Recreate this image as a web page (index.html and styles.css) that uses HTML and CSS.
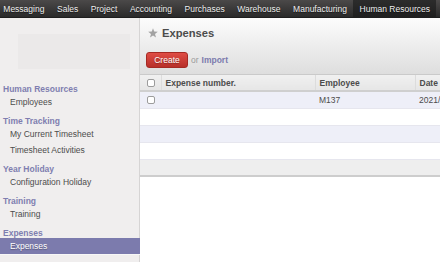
FILE: index.html
```html
<!DOCTYPE html>
<html>
<head>
<meta charset="utf-8">
<link rel="stylesheet" href="styles.css">
</head>
<body>
<nav class="topbar">
  <a class="tab first">Messaging</a>
  <a class="tab">Sales</a>
  <a class="tab">Project</a>
  <a class="tab">Accounting</a>
  <a class="tab">Purchases</a>
  <a class="tab">Warehouse</a>
  <a class="tab">Manufacturing</a>
  <a class="tab active">Human Resources</a>
</nav>
<div class="layout">
  <aside class="sidebar">
    <div class="logo"></div>
    <div class="section">Human Resources</div>
    <div class="item">Employees</div>
    <div class="section">Time Tracking</div>
    <div class="item">My Current Timesheet</div>
    <div class="item">Timesheet Activities</div>
    <div class="section">Year Holiday</div>
    <div class="item">Configuration Holiday</div>
    <div class="section">Training</div>
    <div class="item">Training</div>
    <div class="section">Expenses</div>
    <div class="item selected">Expenses</div>
  </aside>
  <main class="main">
    <header class="view-header">
      <h1 class="title">
        <svg class="star" viewBox="0 0 10 10" width="10" height="10"><path d="M5 0.3 L6.2 3.6 L9.8 3.7 L7 5.9 L8 9.4 L5 7.4 L2 9.4 L3 5.9 L0.2 3.7 L3.8 3.6 Z" fill="#a3a3a3"/></svg>
        <span>Expenses</span>
      </h1>
      <div class="actions">
        <button class="btn-create">Create</button>
        <span class="or">or</span>
        <a class="import">Import</a>
      </div>
    </header>
    <table class="list">
      <colgroup>
        <col class="c-check"><col class="c-num"><col class="c-emp"><col class="c-date">
      </colgroup>
      <thead>
        <tr>
          <th class="cb-cell"><span class="cb"></span></th>
          <th>Expense number.</th>
          <th>Employee</th>
          <th>Date</th>
        </tr>
      </thead>
      <tbody>
        <tr class="odd">
          <td class="cb-cell"><span class="cb"></span></td>
          <td></td>
          <td>M137</td>
          <td>2021/05/12</td>
        </tr>
        <tr><td></td><td></td><td></td><td></td></tr>
        <tr class="odd"><td></td><td></td><td></td><td></td></tr>
        <tr><td></td><td></td><td></td><td></td></tr>
      </tbody>
      <tfoot>
        <tr><td></td><td></td><td></td><td></td></tr>
      </tfoot>
    </table>
  </main>
</div>
</body>
</html>
```

FILE: styles.css
```css
* { box-sizing: border-box; }
html, body {
  margin: 0;
  padding: 0;
  width: 440px;
  height: 262px;
  overflow: hidden;
  background: #ffffff;
  font-family: "Liberation Sans", Arial, sans-serif;
  font-size: 8.5px;
  color: #4c4c4c;
}

.topbar {
  display: flex;
  height: 18px;
  background: linear-gradient(#4b4949, #2a2a2a);
  border-bottom: 1px solid #1e1e1e;
  padding-left: 0;
}
.tab {
  display: flex;
  align-items: center;
  padding: 0 6.3px;
  color: #eeeeee;
  text-shadow: 0 1px 1px rgba(0,0,0,0.6);
  white-space: nowrap;
}
.tab.first { padding-left: 3.3px; }
.tab.active {
  background: linear-gradient(#2c2c2c, #1f1f1f);
}

.layout {
  display: flex;
  height: 244px;
}

.sidebar {
  width: 140px;
  flex: none;
  background: #f0eeee;
  border-right: 1px solid #d6d4d4;
  display: flex;
  flex-direction: column;
}
.logo {
  margin: 16px 0 9px 18px;
  width: 112px;
  height: 35px;
  background: #ebe9e9;
}
.section {
  margin-top: 6px;
  height: 10px;
  line-height: 10px;
  padding-left: 3px;
  font-weight: bold;
  color: #7f7eb0;
}
.item {
  height: 16px;
  line-height: 16px;
  padding-left: 10px;
  color: #4c4c4c;
}
.item.selected {
  background: #7c7bad;
  color: #ffffff;
  text-shadow: 0 1px 1px rgba(0,0,0,0.3);
  margin-right: -1px;
  border-bottom: 1px solid #f7f7f7;
  height: 17px;
}

.main {
  flex: 1;
  min-width: 0;
  overflow: hidden;
}
.view-header {
  height: 57px;
  padding: 8px 0 0 6px;
  background: linear-gradient(#fcfcfc, #dedede);
  border-bottom: 1px solid #cacaca;
}
.title {
  margin: 0;
  height: 14px;
  display: flex;
  align-items: center;
  gap: 4px;
  font-size: 11.2px;
  font-weight: bold;
  color: #4c4c4c;
}
.star { margin-left: 2px; }
.actions {
  margin-top: 12px;
  display: flex;
  align-items: center;
  height: 16px;
}
.btn-create {
  height: 16px;
  width: 42px;
  padding: 0;
  border: 1px solid #a52a24;
  border-radius: 3px;
  background: linear-gradient(#df4d45, #b8302a);
  color: #ffffff;
  font-family: inherit;
  font-size: 8.5px;
  text-shadow: 0 1px 1px rgba(0,0,0,0.3);
}
.or {
  margin-left: 3px;
  color: #9a9a9a;
}
.import {
  margin-left: 3px;
  color: #7c7bad;
  font-weight: bold;
}

.list {
  width: 300px;
  border-collapse: collapse;
  table-layout: fixed;
}
.c-check { width: 21px; }
.c-num { width: 154px; }
.c-emp { width: 100px; }
.c-date { width: 25px; }
.list th, .list td {
  padding: 0 0 0 4px;
  text-align: left;
  white-space: nowrap;
  overflow: hidden;
  height: 17px;
}
.list thead th {
  height: 16px;
  background: linear-gradient(#f0f0f0, #e6e6e6);
  font-weight: bold;
  color: #4c4c4c;
  border-left: 1px solid #dcdcdc;
  border-bottom: 2px solid #cfcfcf;
}
.list thead th:first-child { border-left: none; }
.list .cb-cell { padding-left: 7px; }
.cb {
  display: block;
  width: 8px;
  height: 8px;
  border: 1px solid #9c9c9c;
  border-radius: 2px;
  background: #ffffff;
}
.list tbody tr { background: #ffffff; }
.list tbody tr.odd { background: #eeeff8; }
.list tbody td { border-bottom: 1px solid #e6e6ee; }
.list tfoot td {
  height: 17px;
  background: #eeeeee;
  border-top: 1px solid #d4d4d4;
  border-bottom: 2px solid #cdcdcd;
}
```
